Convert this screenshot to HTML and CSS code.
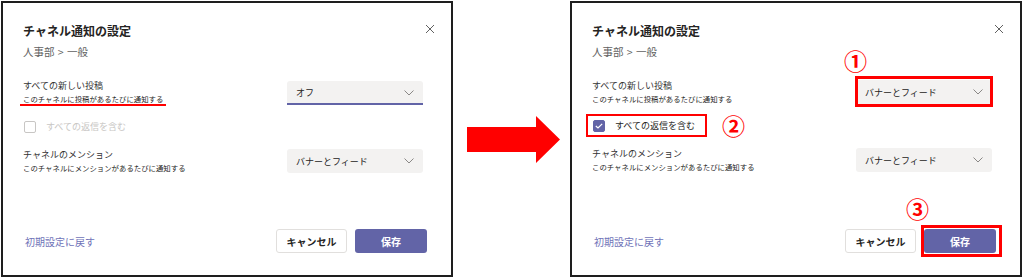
FILE: index.html
```html
<!DOCTYPE html>
<html lang="ja">
<head>
<meta charset="UTF-8" />
<meta name="viewport" content="width=device-width, initial-scale=1" />
<title>チャネル通知の設定</title>
<link rel="stylesheet" href="styles.css">
</head>
<body>

<div class="shot">
  <!-- before -->
  <div class="dialog">
    <div class="dlg-head">
      <h2 class="dlg-title">チャネル通知の設定</h2>
      <svg class="close" width="10" height="10" viewBox="0 0 10 10"><path d="M1 1L9 9M9 1L1 9" stroke="#616161" stroke-width="1" fill="none"/></svg>
    </div>
    <div class="dlg-sub">人事部 &gt; 一般</div>

    <div class="row first">
      <div class="row-text">
        <div class="row-label">すべての新しい投稿</div>
        <div class="row-desc"><span class="underline">このチャネルに投稿があるたびに通知する</span></div>
      </div>
      <div class="select focused">
        <span>オフ</span>
        <svg width="10" height="6" viewBox="0 0 10 6"><path d="M0.5 0.5L5 5L9.5 0.5" stroke="#8a8886" fill="none"/></svg>
      </div>
    </div>

    <label class="check disabled">
      <span class="box"></span>
      <span>すべての返信を含む</span>
    </label>

    <div class="row">
      <div class="row-text">
        <div class="row-label">チャネルのメンション</div>
        <div class="row-desc">このチャネルにメンションがあるたびに通知する</div>
      </div>
      <div class="select">
        <span>バナーとフィード</span>
        <svg width="10" height="6" viewBox="0 0 10 6"><path d="M0.5 0.5L5 5L9.5 0.5" stroke="#8a8886" fill="none"/></svg>
      </div>
    </div>

    <div class="dlg-foot">
      <a class="reset">初期設定に戻す</a>
      <div class="btns">
        <button class="btn">キャンセル</button>
        <button class="btn primary">保存</button>
      </div>
    </div>
  </div>

  <svg class="arrow" width="93" height="47" viewBox="0 0 93 47"><polygon points="0,11 69,11 69,0 93,23.5 69,47 69,36 0,36" fill="#ff0000"/></svg>

  <!-- after -->
  <div class="dialog">
    <div class="dlg-head">
      <h2 class="dlg-title">チャネル通知の設定</h2>
      <svg class="close" width="10" height="10" viewBox="0 0 10 10"><path d="M1 1L9 9M9 1L1 9" stroke="#616161" stroke-width="1" fill="none"/></svg>
    </div>
    <div class="dlg-sub">人事部 &gt; 一般</div>

    <div class="row first">
      <div class="row-text">
        <div class="row-label">すべての新しい投稿</div>
        <div class="row-desc">このチャネルに投稿があるたびに通知する</div>
      </div>
      <div class="select marked">
        <span>バナーとフィード</span>
        <svg width="10" height="6" viewBox="0 0 10 6"><path d="M0.5 0.5L5 5L9.5 0.5" stroke="#8a8886" fill="none"/></svg>
        <span class="num num-1">①</span>
      </div>
    </div>

    <label class="check checked">
      <span class="box"><svg width="8" height="6" viewBox="0 0 8 6"><path d="M0.8 3L3 5L7.2 0.8" stroke="#fff" stroke-width="1.2" fill="none"/></svg></span>
      <span>すべての返信を含む</span>
      <span class="num num-2">②</span>
    </label>

    <div class="row">
      <div class="row-text">
        <div class="row-label">チャネルのメンション</div>
        <div class="row-desc">このチャネルにメンションがあるたびに通知する</div>
      </div>
      <div class="select">
        <span>バナーとフィード</span>
        <svg width="10" height="6" viewBox="0 0 10 6"><path d="M0.5 0.5L5 5L9.5 0.5" stroke="#8a8886" fill="none"/></svg>
      </div>
    </div>

    <div class="dlg-foot">
      <a class="reset">初期設定に戻す</a>
      <div class="btns">
        <button class="btn">キャンセル</button>
        <button class="btn primary marked">保存<span class="num num-3">③</span></button>
      </div>
    </div>
  </div>
</div>

</body>
</html>
```

FILE: styles.css
```css
body {
  margin: 0;
  background: #fff;
  font-family: "Noto Sans CJK JP", "Noto Sans", sans-serif;
  color: #252423;
}
.shot {
  display: flex;
  align-items: center;
  padding: 1px 0 0 1px;
}
.dialog {
  position: relative;
  box-sizing: border-box;
  width: 452px;
  height: 276px;
  border: 2px solid #1e1e1e;
  padding: 19px 16px 0 20px;
  display: flex;
  flex-direction: column;
  background: #fff;
}
.arrow {
  margin: 0 10px 0 14px;
}
.dlg-head {
  display: flex;
  align-items: center;
  justify-content: space-between;
}
.dlg-title {
  margin: 0;
  font-size: 12px;
  line-height: 18px;
  font-weight: bold;
}
.close {
  margin-top: -4px;
}
.dlg-sub {
  margin-top: 5px;
  font-size: 10.5px;
  line-height: 14px;
  color: #616161;
  word-spacing: 1px;
}
.row {
  display: flex;
  align-items: center;
  justify-content: space-between;
  padding-right: 12px;
  margin-top: 13px;
}
.row.first {
  margin-top: 20px;
}
.row-label {
  font-size: 9px;
  line-height: 14px;
  color: #333;
}
.row-desc {
  font-size: 7.4px;
  line-height: 12px;
}
.underline {
  display: inline-block;
  line-height: 10px;
  padding: 0 3px;
  margin-left: -3px;
  border-bottom: 2px solid #ff0000;
}
.select {
  position: relative;
  box-sizing: border-box;
  width: 136px;
  height: 24px;
  background: #f3f2f1;
  border-radius: 3px;
  display: flex;
  align-items: center;
  justify-content: space-between;
  padding: 0 9px;
  font-size: 9px;
  color: #252423;
}
.select.focused {
  border-bottom: 2px solid #6264a7;
  border-radius: 3px 3px 0 0;
  padding-top: 2px;
}
.select.marked::after {
  content: "";
  position: absolute;
  left: -1px;
  top: -4px;
  width: 138px;
  height: 31px;
  box-sizing: border-box;
  border: 3px solid #ff0000;
}
.check {
  position: relative;
  display: flex;
  align-items: center;
  gap: 10px;
  margin-top: 13px;
  font-size: 9px;
  line-height: 16px;
}
.check .box {
  box-sizing: border-box;
  width: 12px;
  height: 12px;
  margin-left: 1px;
  border: 1px solid #c8c6c4;
  border-radius: 2px;
  display: flex;
  align-items: center;
  justify-content: center;
}
.check.disabled {
  color: #c8c6c4;
}
.check.checked .box {
  background: #6264a7;
  border-color: #6264a7;
}
.check.checked::after {
  content: "";
  position: absolute;
  left: -6px;
  top: -4px;
  width: 121px;
  height: 23px;
  box-sizing: border-box;
  border: 2px solid #ff0000;
}
.dlg-foot {
  margin-top: auto;
  padding: 0 8px 22px 2px;
  display: flex;
  align-items: center;
  justify-content: space-between;
}
.reset {
  font-size: 10px;
  color: #6f73b8;
  cursor: pointer;
}
.btns {
  display: flex;
  gap: 8px;
}
.btn {
  position: relative;
  width: 71px;
  height: 24px;
  box-sizing: border-box;
  border: 1px solid #e1dfdd;
  border-radius: 3px;
  background: #fff;
  color: #252423;
  font-family: inherit;
  font-size: 10px;
  font-weight: bold;
  padding: 0;
}
.btn.primary {
  width: 72px;
  border: none;
  background: #6264a7;
  color: #fff;
}
.btn.primary.marked::after {
  content: "";
  position: absolute;
  left: -3px;
  top: -4px;
  width: 81px;
  height: 32px;
  box-sizing: border-box;
  border: 3px solid #ff0000;
}
.num {
  position: absolute;
  font-size: 23px;
  line-height: 23px;
  font-weight: bold;
  color: #ff0000;
}
.num-1 {
  left: -12px;
  top: -31px;
}
.num-2 {
  left: 130px;
  top: -4px;
}
.num-3 {
  left: -18px;
  top: -32px;
}
```
